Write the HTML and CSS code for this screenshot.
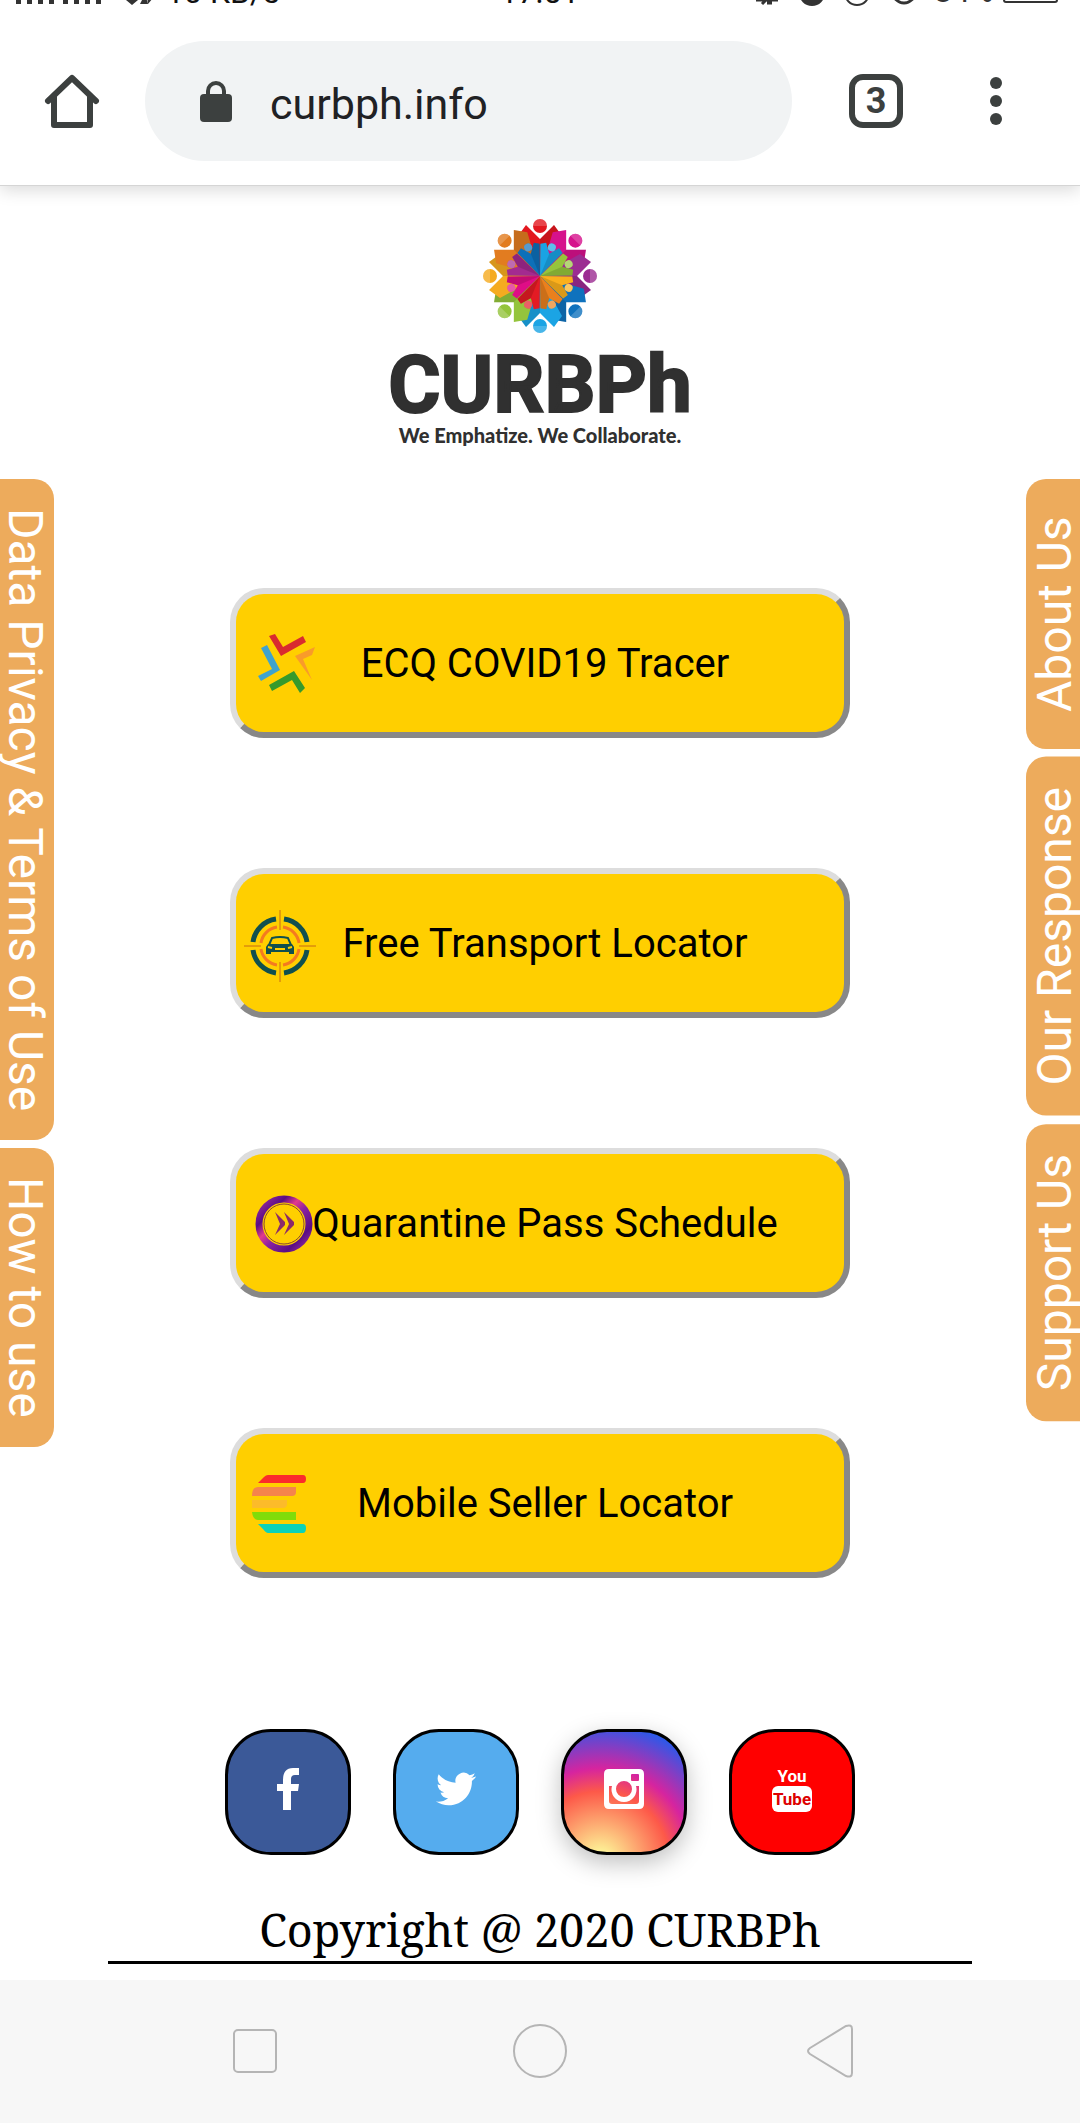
FILE: index.html
```html
<!DOCTYPE html>
<html lang="en">
<head>
    <meta charset="UTF-8">
    <meta name="viewport" content="width=device-width, initial-scale=1.0">
    <title>CURBPh</title>
    <link rel="stylesheet" href="styles.css">
</head>
<body>
    <header class="browser">
        <div class="status">
            <svg width="90" height="32" viewBox="0 0 90 32" fill="#333"><path d="M0 16h5v12h-5zM11 12h5v16h-5zM22 8h5v20h-5zM33 4h5v24h-5zM47 16h5v12h-5zM58 12h5v16h-5zM69 8h5v20h-5zM80 4h5v24h-5z"/></svg>
            <svg class="data" width="26" height="32" viewBox="0 0 26 32" fill="#333"><path d="M0 24h5V8h3v16h4l-6 5zM14 28l5-10 3 10zM20 12h3v10h4l-5 6z"/></svg>
            <span class="speed">10 KB/s</span>
            <span class="clock">17:51</span>
            <svg width="300" height="32" viewBox="0 0 300 32" fill="none" stroke="#333" stroke-width="2">
                <path d="M2 24h22M8 28l4-4M13 27h5" stroke-width="3"/>
                <circle cx="58" cy="17" r="12" fill="#333"/>
                <circle cx="103" cy="17" r="12"/>
                <circle cx="150" cy="16" r="11" stroke-width="3"/>
                <rect x="250" y="4" width="53" height="22" rx="2"/>
                <text class="battery" x="180" y="26">84%</text>
            </svg>
        </div>
        <div class="toolbar">
            <button class="tool home" aria-label="Home">
                <svg width="54" height="54" viewBox="0 0 54 54" fill="none" stroke="#3c403f" stroke-width="6" stroke-linecap="round" stroke-linejoin="round"><path d="M3 27 27 4l24 23M9 23v28h36V23"/></svg>
            </button>
            <div class="address">
                <svg width="32" height="42" viewBox="0 0 32 42"><rect y="14" width="32" height="28" rx="4" fill="#3c403f"/><path d="M8 16v-5a8 8 0 0 1 16 0v5" fill="none" stroke="#3c403f" stroke-width="4"/></svg>
                <input class="url" type="text" value="curbph.info" aria-label="Address">
            </div>
            <button class="tool tabs" aria-label="Open tabs">3</button>
            <button class="tool" aria-label="Menu">
                <svg width="12" height="48" viewBox="0 0 12 48" fill="#3c403f"><circle cx="6" cy="6" r="6"/><circle cx="6" cy="24" r="6"/><circle cx="6" cy="42" r="6"/></svg>
            </button>
        </div>
    </header>

    <main class="page">
        <nav class="side left">
            <a class="tab" href="#privacy">Data Privacy &amp; Terms of Use</a>
            <a class="tab" href="#howto">How to use</a>
        </nav>

        <div class="container">
            <div class="logo">
                <svg width="114" height="114" viewBox="-57 -57 114 114">
                    <defs>
                        <g id="person">
                            <path d="M0 0-22-40-14-51 0-37 14-51 22-40z" fill="currentColor"/>
                            <path d="M0 0V-37L14-51 22-40z" fill="#000" opacity=".12"/>
                            <circle cy="-50" r="7" fill="currentColor"/>
                            <path d="M-7-50a7 7 0 0 1 14 0z" fill="#fff" opacity=".2"/>
                        </g>
                        <g id="petal">
                            <path d="M0 0-12-30-7-33 0-24 7-33 12-30z" fill="currentColor"/>
                            <path d="M0 0V-24L7-33 12-30z" fill="#000" opacity=".13"/>
                            <circle cy="-31" r="4" fill="currentColor"/>
                            <circle cy="-31" r="4" fill="#fff" opacity=".3"/>
                        </g>
                    </defs>
                    <use href="#person" color="#e3171f"/>
                    <use href="#person" color="#d6128c" transform="rotate(45)"/>
                    <use href="#person" color="#9c2c92" transform="rotate(90)"/>
                    <use href="#person" color="#0f72bd" transform="rotate(135)"/>
                    <use href="#person" color="#1ba4e4" transform="rotate(180)"/>
                    <use href="#person" color="#94c43c" transform="rotate(225)"/>
                    <use href="#person" color="#f5ab20" transform="rotate(270)"/>
                    <use href="#person" color="#e27c20" transform="rotate(315)"/>
                    <use href="#petal" color="#1aa3e3" transform="rotate(22.5)"/>
                    <use href="#petal" color="#96c43b" transform="rotate(67.5)"/>
                    <use href="#petal" color="#fbb01c" transform="rotate(112.5)"/>
                    <use href="#petal" color="#ea801d" transform="rotate(157.5)"/>
                    <use href="#petal" color="#e31b24" transform="rotate(202.5)"/>
                    <use href="#petal" color="#df0d86" transform="rotate(247.5)"/>
                    <use href="#petal" color="#a32a90" transform="rotate(292.5)"/>
                    <use href="#petal" color="#0d70b9" transform="rotate(337.5)"/>
                </svg>
                <h1>CURBPh</h1>
                <p>We Emphatize. We Collaborate.</p>
            </div>

            <div class="services">
                <button class="service">
                    <svg class="icon" viewBox="0 0 64 64">
                        <path d="M23 5 29 3 37 16 57 5 60 11 35 25z" fill="#d92b2f"/>
                        <path d="M15 17 21 14 34 39 15 50 12 45 26 38z" fill="#3fa3cf"/>
                        <path d="M23 54 48 40 59 57 54 62 46 49 26 60z" fill="#369a2c"/>
                        <path d="M49 25 69 16 66 24 57 28 66 49z" fill="#f99b2a"/>
                    </svg>
                    <span>ECQ COVID19 Tracer</span>
                </button>
                <button class="service">
                    <svg class="icon" viewBox="0 0 64 64" fill="none">
                        <g stroke="#10504f" stroke-width="5">
                            <path d="M38 8A27 27 0 0 1 61 31M61 39A27 27 0 0 1 38 62M30 62A27 27 0 0 1 7 39M7 31A27 27 0 0 1 30 8"/>
                        </g>
                        <g stroke="#f47a20" stroke-width="3">
                            <path d="M37 16A19 19 0 0 1 53 32M53 38A19 19 0 0 1 37 54M31 54A19 19 0 0 1 15 38M15 32A19 19 0 0 1 31 16"/>
                        </g>
                        <path d="M34-1v20M34 51v20M-2 35h17M53 35h17" stroke="#c86a14"/>
                        <path d="M23 34 26 27q8-2 16 0l3 7" stroke="#10504f" stroke-width="2"/>
                        <path d="M22 33h24l2 3v7h-5v-2H25v2h-5v-7z" fill="#10504f"/>
                        <path d="M29 38h10M22 36l4 1M46 36l-4 1" stroke="#ffcf00" stroke-width="2"/>
                    </svg>
                    <span>Free Transport Locator</span>
                </button>
                <button class="service">
                    <svg class="icon" viewBox="0 0 64 64" fill="none">
                        <defs>
                            <linearGradient id="ring" x1="0" y1="0" x2="1" y2="1">
                                <stop offset="0" stop-color="#a030a0"/>
                                <stop offset=".25" stop-color="#5a0d86"/>
                                <stop offset=".4" stop-color="#e23a8c"/>
                                <stop offset=".55" stop-color="#8a22a0"/>
                                <stop offset=".8" stop-color="#5a0d86"/>
                                <stop offset="1" stop-color="#a030a0"/>
                            </linearGradient>
                        </defs>
                        <circle cx="38" cy="33" r="25" stroke="url(#ring)" stroke-width="7"/>
                        <circle cx="38" cy="33" r="20" stroke="#8b4a30"/>
                        <path d="M29 21 39 31v3L29 44l5-11zM38 21 48 31v3L38 44l5-11z" fill="#8b2a6a"/>
                    </svg>
                    <span>Quarantine Pass Schedule</span>
                </button>
                <button class="service">
                    <svg class="icon" viewBox="0 0 64 64">
                        <path d="M12 12 18 6q2-2 4-2h35q3 0 3 4t-3 4z" fill="#fb2b2b"/>
                        <path d="M6 25q0-9 6-9h38v5q0 4-4 4z" fill="#f5844c"/>
                        <path d="M6 29h35v4q0 4-4 4H6z" fill="#fcbb2a"/>
                        <path d="M6 41h44v8H12q-5 0-6-8z" fill="#80dc0a"/>
                        <path d="M12 53h45q3 0 3 4 0 5-3 5H22q-2 0-5-4z" fill="#0cd2b8"/>
                    </svg>
                    <span>Mobile Seller Locator</span>
                </button>
            </div>

            <div class="social">
                <a class="facebook" href="#facebook" aria-label="Facebook">
                    <svg width="22" height="42" viewBox="0 0 22 42" fill="#fff"><path d="M6 42V23H0v-7h6v-4Q6 0 16 0h6v7h-4q-4 0-4 4v5h8l-1 7h-7v19z"/></svg>
                </a>
                <a class="twitter" href="#twitter" aria-label="Twitter">
                    <svg width="40" height="40" viewBox="0 0 24 24" fill="#fff"><path d="M23.953 4.57a10 10 0 01-2.825.775 4.958 4.958 0 002.163-2.723c-.951.555-2.005.959-3.127 1.184a4.92 4.92 0 00-8.384 4.482C7.69 8.095 4.067 6.13 1.64 3.162a4.822 4.822 0 00-.666 2.475c0 1.71.87 3.213 2.188 4.096a4.904 4.904 0 01-2.228-.616v.06a4.923 4.923 0 003.946 4.827 4.996 4.996 0 01-2.212.085 4.936 4.936 0 004.604 3.417 9.867 9.867 0 01-6.102 2.105c-.39 0-.779-.023-1.17-.067a13.995 13.995 0 007.557 2.209c9.053 0 13.998-7.496 13.998-13.985 0-.21 0-.42-.015-.63A9.935 9.935 0 0024 4.59z"/></svg>
                </a>
                <a class="instagram" href="#instagram" aria-label="Instagram">
                    <svg width="40" height="40" viewBox="0 0 40 40"><path fill="#fff" fill-rule="evenodd" d="M5 0h30q5 0 5 5v30q0 5-5 5H5q-5 0-5-5V5q0-5 5-5zM28 5q-1 0-1 1v5q0 1 1 1h6q1 0 1-1V6q0-1-1-1zM5 17v15q0 3 3 3h24q3 0 3-3V17h-3a12.500 12.500 0 1 1-24 0zM20 12a8 8 0 1 0 0 16 8 8 0 0 0 0-16z"/></svg>
                </a>
                <a class="youtube" href="#youtube">
                    <span class="you">You</span>
                    <span class="tube">Tube</span>
                </a>
            </div>
        </div>

        <nav class="side right">
            <a class="tab" href="#about">About Us</a>
            <a class="tab" href="#response">Our Response</a>
            <a class="tab" href="#support">Support Us</a>
        </nav>
    </main>

    <footer class="copyright">Copyright @ 2020 CURBPh</footer>

    <div class="keys">
        <button aria-label="Recent apps"><svg width="60" height="60" viewBox="0 0 60 60"><rect x="9" y="9" width="42" height="42" rx="4"/></svg></button>
        <button aria-label="Home screen"><svg width="60" height="60" viewBox="0 0 60 60"><circle cx="30" cy="30" r="26"/></svg></button>
        <button aria-label="Back"><svg width="60" height="60" viewBox="0 0 60 60"><path d="M15 27 51 5q6-2 6 3v44q0 5-6 3L15 33q-4-3 0-6z"/></svg></button>
    </div>
</body>
</html>
```
FILE: styles.css
```css
* { box-sizing: border-box; }
body { font-family: Roboto, Arial, sans-serif; margin: 0; min-height: 100vh; display: flex; flex-direction: column; background: #fff; overflow-x: hidden; }
button { font-family: inherit; cursor: pointer; }
a { text-decoration: none; }
svg { display: block; flex: none; overflow: visible; }

/* phone and browser bars */
.browser { background: #fff; border-bottom: 1px solid #d5d5d5; box-shadow: 0 4px 16px rgba(0, 0, 0, 0.15); }
.status { display: flex; align-items: center; justify-content: space-between; height: 32px; margin-top: -24px; padding: 0 26px 0 16px; font-size: 32px; line-height: 32px; color: #111; }
.status .data { margin-left: 20px; }
.status .speed { margin-left: 14px; }
.status .clock { margin: 0 auto 0 220px; }
.battery { font-size: 32px; fill: #333; stroke: none; }
.toolbar { display: flex; align-items: center; padding: 33px 78px 24px 45px; gap: 46px; }
.tool { flex: none; background: none; border: 0; padding: 0; }
.address { flex: 1; min-width: 0; display: flex; align-items: center; gap: 38px; height: 120px; padding: 0 55px; border-radius: 60px; background: #f1f3f4; }
.url { flex: 1; min-width: 0; border: 0; padding: 6px 0 0; background: none; font-family: inherit; font-size: 43px; color: #202124; }
.tabs { width: 54px; height: 54px; margin: 0 41px 0 11px; border: 6px solid #3c403f; border-radius: 14px; font-size: 36px; line-height: 40px; font-weight: bold; color: #3c403f; }

.page { flex: 1; display: grid; grid-template-columns: 54px 1fr 54px; }

/* tabs stuck to the page edges */
.side { display: flex; flex-direction: column; gap: 8px; padding-top: 293px; }
.tab { writing-mode: vertical-rl; width: 54px; min-height: 270px; padding: 29px 4px 29px 0; line-height: 50px; font-size: 48px; text-align: center; color: #fff; background: #edab5c; border-radius: 0 20px 20px 0; white-space: nowrap; }
.right .tab { padding: 30px 4px 30px 0; transform: rotate(180deg); }

.container { display: flex; flex-direction: column; align-items: center; padding-top: 33px; }
.logo { display: flex; flex-direction: column; align-items: center; color: #303030; }
.logo h1 { margin: 14px 0 0; font-size: 80px; line-height: 76px; font-weight: bold; -webkit-text-stroke: 2px #303030; }
.logo p { margin: 0; font-family: Lato, sans-serif; font-size: 20px; line-height: 24px; font-weight: 900; }

.services { display: flex; flex-direction: column; gap: 130px; width: 100%; max-width: 620px; margin-top: 141px; }
.service { display: flex; align-items: center; height: 150px; padding: 0 64px 0 10px; background: #ffcf00; border: 6px solid; border-color: #ddd #888 #888 #ddd; border-radius: 34px; font-size: 40px; color: #000; }
.service .icon { width: 64px; height: 64px; }
.service span { flex: 1; text-align: center; white-space: nowrap; }

.social { display: flex; gap: 42px; margin-top: 151px; }
.social a { display: flex; flex-direction: column; align-items: center; justify-content: center; width: 126px; height: 126px; padding-bottom: 6px; border: 3px solid #000; border-radius: 46px; }
.facebook { background: #3b5998; }
.twitter { background: #55acee; }
.instagram { background: radial-gradient(circle at 30% 107%, #fdf497 0%, #fdf497 5%, #fd5949 45%, #d6249f 60%, #285aeb 90%); box-shadow: 0 8px 24px rgba(0, 0, 0, 0.25); }
.youtube { background: #f00; font-weight: bold; font-size: 17px; line-height: 20px; color: #fff; }
.tube { padding: 3px 1px; border-radius: 6px; background: #fff; color: #d00; }

.copyright { width: 80%; margin: 44px auto 16px; border-bottom: 3px solid #000; text-align: center; font-family: "Noto Serif", "Liberation Serif", serif; font-size: 45px; line-height: 62px; }

.keys { display: flex; justify-content: space-around; padding: 41px 112px 42px; background: #f7f7f7; }
.keys button { border: 0; padding: 0; background: none; }
.keys svg { fill: none; stroke: #b5b5b5; stroke-width: 2; }
```
